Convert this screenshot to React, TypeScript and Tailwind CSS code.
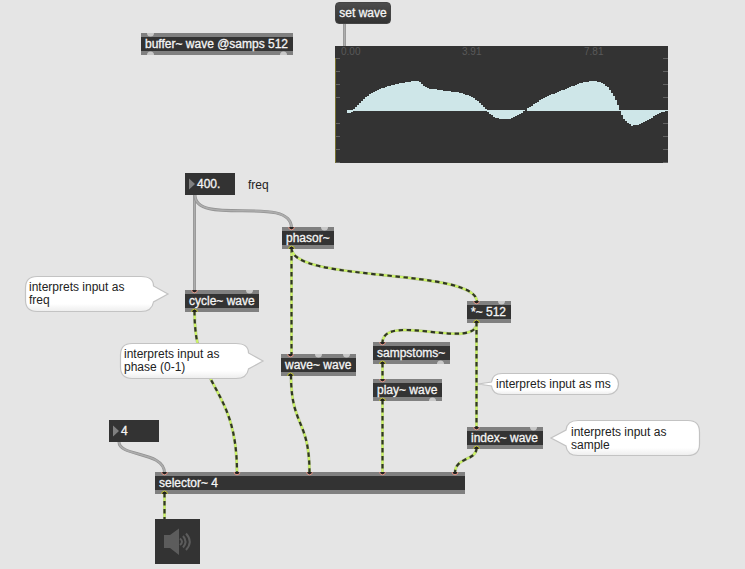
import React from "react";

type NodeProps = {
  x: number;
  y: number;
  w: number;
  label: string;
  inlets?: number[];
  openInlets?: number[];
  outlets?: number[];
  openOutlets?: number[];
};

function PatchObject({ x, y, w, label, inlets = [], openInlets = [], outlets = [], openOutlets = [] }: NodeProps) {
  return (
    <div
      className="absolute flex h-[22px] items-center border-y-4 border-[#808080] bg-[#333] pl-1 text-[#f5f5f5]"
      style={{ left: x, top: y, width: w }}
    >
      <span className="leading-[14px] [-webkit-text-stroke:0.3px_#f5f5f5]">{label}</span>
      <svg className="absolute -top-1 left-0 overflow-hidden" width={w} height={22}>
        {openInlets.map((p) => (
          <circle key={p} cx={p} cy={0} r={3.5} fill="#c8c8c8" />
        ))}
        {openOutlets.map((p) => (
          <circle key={p} cx={p} cy={22} r={3.5} fill="#c8c8c8" />
        ))}
        {inlets.map((p) => (
          <path key={p} d={`M${p - 3} -.5a3 3.3 0 0 0 6 0z`} fill="#222" stroke="#e99a8a" strokeWidth={1} />
        ))}
        {outlets.map((p) => (
          <path key={p} d={`M${p - 3} 22.5a3 3.5 0 0 1 6 0z`} fill="#222" stroke="#c9cc3c" strokeWidth={1} />
        ))}
      </svg>
    </div>
  );
}

function NumberBox({ x, y, value }: { x: number; y: number; value: string }) {
  return (
    <div
      className="absolute flex h-[22px] w-[50px] items-center bg-[#333] pl-1 text-[#f5f5f5]"
      style={{ left: x, top: y }}
    >
      <svg width="8" height="12">
        <path d="M0 0.5L6 6L0 11.5z" fill="#808080" />
      </svg>
      <span className="[-webkit-text-stroke:0.3px_#f5f5f5]">{value}</span>
    </div>
  );
}

type BubbleProps = { x: number; y: number; w: number; h: number; d: string; pad: string; children: React.ReactNode };

function Bubble({ x, y, w, h, d, pad, children }: BubbleProps) {
  return (
    <div className="absolute" style={{ left: x, top: y, width: w, height: h }}>
      <svg className="absolute inset-0 overflow-visible" width={w} height={h}>
        <path d={d} fill="url(#bubble)" stroke="#c3c3c3" strokeWidth="1.2" />
      </svg>
      <div className={`relative whitespace-pre leading-[13px] text-[#222] ${pad}`}>{children}</div>
    </div>
  );
}

const signalCords = [
  "M194.5 311C194.5 390 237 385 237 473",
  "M291.5 248V355",
  "M291.5 248C291.5 283 477 267.5 477 302",
  "M291 375C291 427 309.5 419 309.5 473",
  "M477 322C477 352 382.5 311 382.5 343",
  "M382.5 363V380",
  "M382.5 400V473",
  "M476.5 322V428",
  "M476.5 448C476.5 461 455 457 455 473",
  "M164.5 493V519",
];

const controlCords = [
  "M344.5 23V47",
  "M194.5 195V291",
  "M195 195C195 227 291.5 194 291.5 228",
  "M119 442C119 457 164.5 451 164.5 473",
];

const profile: [number, number][] = [
  [347, 112.7], [351, 112.7], [353, 110.5], [356, 107], [360, 102.5], [366, 97], [372, 93], [378, 89.7],
  [385, 87.3], [392, 85.3], [399, 83.6], [406, 82.1], [412, 81.3], [418, 81.2], [421, 82.6], [425, 86.6],
  [431, 89.2], [442, 89.7], [445, 91.2], [456, 91.8], [463, 93.5], [470, 96], [476, 99.7], [482, 105],
  [487, 110.5], [491, 114.5], [495, 117.2], [500, 118.7], [507, 119.1], [513, 118], [519, 114.5],
  [525, 110.8], [529, 107.5], [535, 103.7], [542, 99], [550, 95.3], [558, 91.7], [566, 88.8], [573, 86],
  [580, 83.4], [587, 81.8], [594, 81], [600, 82], [605, 84.8], [609, 88.2], [613, 94], [617, 102],
  [620, 110.5], [623, 117.5], [627, 122.5], [632, 125.6], [638, 125], [643, 123], [649, 119.5],
  [656, 115], [662, 112.1], [668, 110.6],
];

function levelAt(x: number) {
  for (let i = 1; i < profile.length; i++) {
    const [x0, y0] = profile[i - 1];
    const [x1, y1] = profile[i];
    if (x <= x1) return y0 + ((y1 - y0) * Math.max(0, x - x0)) / (x1 - x0);
  }
  return 110.5;
}

const bars = Array.from({ length: 161 }, (_, i) => {
  const x = 347 + i * 2;
  const y = Math.round(levelAt(x + 1));
  return { x: x - 335, top: Math.min(y, 110) - 46, h: Math.abs(y - 110) };
});

function WaveDisplay() {
  return (
    <div className="absolute left-[335px] top-[46px] h-[117px] w-[333px] bg-[#333] text-[10px] leading-[11px] text-[#595959]">
      <div className="grid grid-cols-[121px_122px_1fr] pl-[6px]">
        <span>0.00</span>
        <span>3.91</span>
        <span>7.81</span>
      </div>
      <svg className="absolute inset-0" width="333" height="117" shapeRendering="crispEdges">
        <rect x="0" y="12" width="1" height="105" fill="#77702d" />
        {[12, 25, 38, 51, 77, 90, 103, 116].map((y) => (
          <path key={y} d={`M1 ${y}.5h4M328 ${y}.5h5`} stroke="#626262" />
        ))}
        <path d="M12 64.5H17M18 64.5H190M192 64.5H333" stroke="#cee6e8" />
        {bars.map((b) => (
          <rect key={b.x} x={b.x} y={b.top} width="2" height={b.h} fill="#cee6e8" />
        ))}
      </svg>
    </div>
  );
}

const rightTail = "M12 .5H116Q128.5 .5 128.5 10L143 18L128.5 26Q127 35.5 116 35.5H12Q.5 35.5 .5 24V12Q.5 .5 12 .5Z";

export default function App() {
  return (
    <main className="relative h-[569px] w-[745px] overflow-hidden bg-[#e5e5e5] font-['Liberation_Sans',Arial,sans-serif] text-[12px] leading-[14px]">
      <svg className="absolute inset-0" width="745" height="569" fill="none">
        <defs>
          <linearGradient id="bubble" x1="0" y1="0" x2="0" y2="1">
            <stop offset="0.78" stopColor="#fff" />
            <stop offset="1" stopColor="#ededed" />
          </linearGradient>
        </defs>
        {controlCords.map((d) => (
          <g key={d}>
            <path d={d} stroke="#929292" strokeWidth="3" />
            <path d={d} stroke="#adadad" strokeWidth="1.6" />
          </g>
        ))}
        {signalCords.map((d) => (
          <g key={d}>
            <path d={d} stroke="#bcc5a5" strokeWidth="3" />
            <path d={d} stroke="#ccf562" strokeWidth="2" />
            <path d={d} stroke="#303526" strokeWidth="2.2" strokeDasharray="4.4 3.6" />
          </g>
        ))}
      </svg>

      <div className="absolute left-[335px] top-[2px] flex h-[22px] w-[56px] items-center justify-center rounded-[4px] border border-[#444] bg-linear-to-b from-[#4c4c4c] to-[#333] text-[#f5f5f5]">
        <span className="[-webkit-text-stroke:0.3px_#f5f5f5]">set wave</span>
      </div>
      <WaveDisplay />

      <PatchObject x={141} y={33} w={152} label="buffer~ wave @samps 512" openInlets={[9.5]} openOutlets={[9.5, 142.5]} />
      <PatchObject x={282} y={227} w={52} label="phasor~" inlets={[9.5]} openInlets={[42.5]} outlets={[9.5]} />
      <PatchObject x={185} y={290} w={74} label="cycle~ wave" inlets={[9.5]} openInlets={[64.5]} outlets={[9.5]} />
      <PatchObject x={281} y={354} w={75} label="wave~ wave" inlets={[9.5]} openInlets={[37.5, 65.5]} outlets={[9.5]} />
      <PatchObject x={373} y={342} w={77} label="sampstoms~" inlets={[9.5]} outlets={[9.5]} openOutlets={[67.5]} />
      <PatchObject x={373} y={379} w={69} label="play~ wave" inlets={[9.5]} outlets={[9.5]} openOutlets={[59.5]} />
      <PatchObject x={467} y={301} w={44} label="*~ 512" inlets={[9.5]} openInlets={[34.5]} outlets={[9.5]} />
      <PatchObject x={467} y={427} w={76} label="index~ wave" inlets={[9.5]} openInlets={[66.5]} outlets={[9.5]} />
      <PatchObject x={155} y={472} w={310} label="selector~ 4" inlets={[9.5, 82, 154.5, 227.5, 300]} outlets={[9.5]} />

      <NumberBox x={185} y={173} value="400." />
      <NumberBox x={109} y={420} value="4" />
      <span className="absolute left-[248px] top-[178px] text-[#222]">freq</span>

      <Bubble x={25} y={276} w={143} h={36} pad="pl-1 pt-[5px]" d={rightTail}>{"interprets input as\nfreq"}</Bubble>
      <Bubble x={120} y={343} w={143} h={36} pad="pl-1 pt-[5px]" d={rightTail}>{"interprets input as\nphase (0-1)"}</Bubble>
      <Bubble
        x={491}
        y={373}
        w={128}
        h={22}
        pad="pl-[5px] pt-[5px]"
        d="M11 .5H117A10.5 10.5 0 0 1 117 21.5H11Q1.5 21.5 .5 13L-13 11L.5 9Q1.5 .5 11 .5Z"
      >
        interprets input as ms
      </Bubble>
      <Bubble
        x={566}
        y={421}
        w={134}
        h={35}
        pad="pl-[5px] pt-[5px]"
        d="M12 -.5H122Q133.5 -.5 133.5 11V23Q133.5 34.5 122 34.5H12Q1 34.5 0 25L-15 17L0 9Q1 -.5 12 -.5Z"
      >
        {"interprets input as\nsample"}
      </Bubble>

      <div className="absolute left-[155px] top-[519px] flex h-[45px] w-[45px] items-center justify-center bg-[#333]">
        <svg width="45" height="45" fill="none">
          <path d="M9 16H15L24 9.5V36L15 29H9Z" fill="#5c5c5c" />
          <path d="M25 19.5Q29 22.7 25 26M28 17Q33 22.7 28 28.5M31 14.5Q38.5 22.7 31 31" stroke="#5c5c5c" strokeWidth="2" />
        </svg>
      </div>
    </main>
  );
}
